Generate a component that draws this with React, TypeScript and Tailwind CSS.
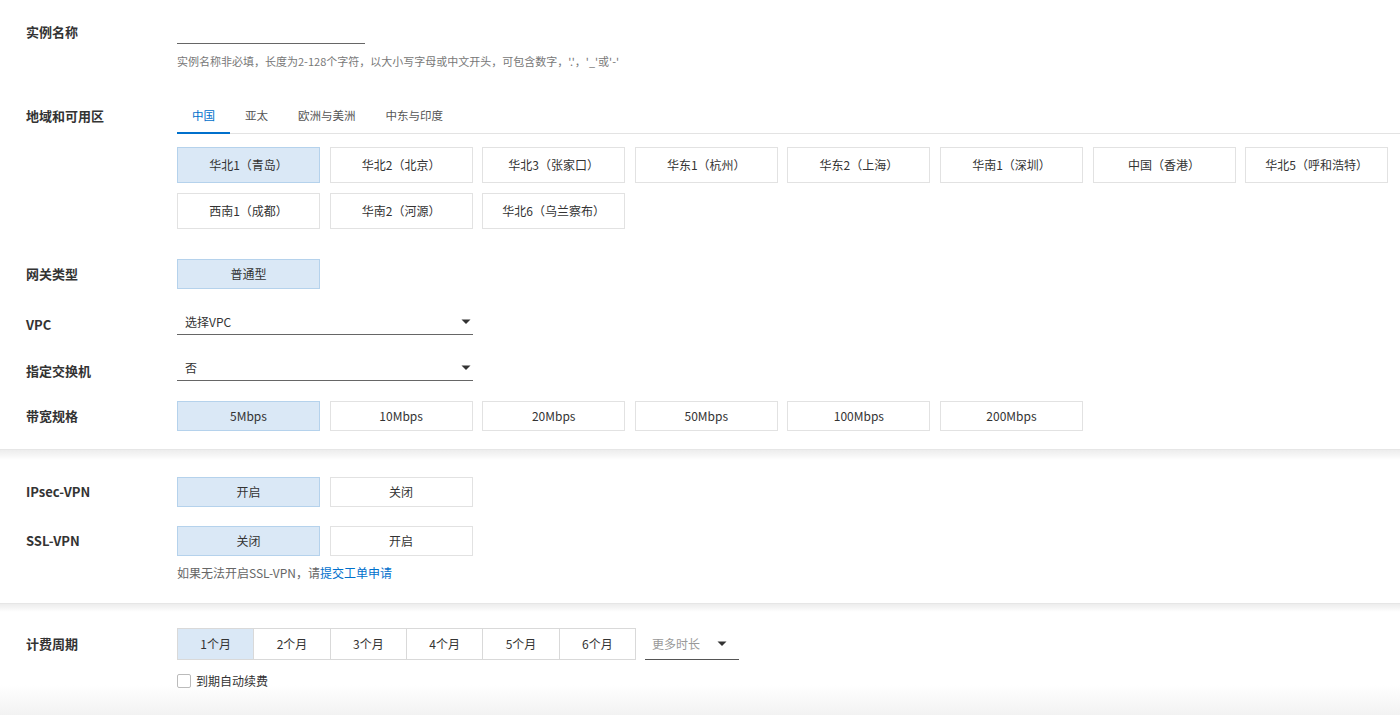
import React from "react";

function Label({ children }: { children: React.ReactNode }) {
  return (
    <div className="w-[177px] shrink-0 pl-[26px] text-[13px] font-bold text-[#333] leading-[20px]">
      {children}
    </div>
  );
}

function Opt({ label, active = false }: { label: string; active?: boolean }) {
  return (
    <div
      className={
        active
          ? "h-full flex items-center justify-center border border-[#b5d2ec] bg-[#dae8f6] text-[12px] text-[#333]"
          : "h-full flex items-center justify-center border border-[#e2e2e2] bg-white text-[12px] text-[#333]"
      }
    >
      {label}
    </div>
  );
}

function Arrow() {
  return (
    <svg width="10" height="6" viewBox="0 0 10 6">
      <polygon points="0.5,0.5 9.5,0.5 5,5" fill="#333" />
    </svg>
  );
}

function Select({ text }: { text: string }) {
  return (
    <div className="w-[296px] h-[26px] border-b border-[#666] flex items-center justify-between pl-[8px] pr-[2px] text-[12px] text-[#333]">
      <span>{text}</span>
      <Arrow />
    </div>
  );
}

function Sep({ h }: { h: string }) {
  return (
    <div
      className={
        h === "a"
          ? "h-[11px] border-t border-[#e6e6e6] bg-[linear-gradient(to_bottom,#ededed,#f5f5f5_50%,#ffffff)]"
          : "h-[9px] border-t border-[#e6e6e6] bg-[linear-gradient(to_bottom,#ededed,#f5f5f5_50%,#ffffff)]"
      }
    />
  );
}

export default function App() {
  const regions = [
    "华北1（青岛）",
    "华北2（北京）",
    "华北3（张家口）",
    "华东1（杭州）",
    "华东2（上海）",
    "华南1（深圳）",
    "中国（香港）",
    "华北5（呼和浩特）",
    "西南1（成都）",
    "华南2（河源）",
    "华北6（乌兰察布）",
  ];
  const bw = ["5Mbps", "10Mbps", "20Mbps", "50Mbps", "100Mbps", "200Mbps"];
  const months = ["1个月", "2个月", "3个月", "4个月", "5个月", "6个月"];
  const tabs = ["中国", "亚太", "欧洲与美洲", "中东与印度"];

  return (
    <div className="w-[1400px] h-[715px] overflow-hidden bg-white font-['Noto_Sans_CJK_SC','Helvetica_Neue',sans-serif] text-[#333]">
      {/* Section 1 */}
      <div className="pt-[20px] pb-[18px]">
        <div className="flex items-center h-[24px]">
          <Label>实例名称</Label>
          <div className="w-[188px] h-[24px] border-b border-[#666]" />
        </div>
        <div className="ml-[177px] mt-[10px] text-[11px] leading-[14px] text-[#777]">
          实例名称非必填，长度为2-128个字符，以大小写字母或中文开头，可包含数字，'.'，'_'或'-'
        </div>

        <div className="flex mt-[30px]">
          <div className="h-[35px] flex items-center">
            <Label>地域和可用区</Label>
          </div>
          <div className="flex-1">
            <div className="flex h-[36px] border-b border-[#e3e3e3]">
              {tabs.map((t, i) => (
                <div
                  key={t}
                  className={
                    i === 0
                      ? "relative px-[15px] flex items-center text-[11.5px] text-[#0070cc]"
                      : "relative px-[15px] flex items-center text-[11.5px] text-[#555]"
                  }
                >
                  {t}
                  {i === 0 && (
                    <div className="absolute left-0 right-0 bottom-[-1px] h-[2px] bg-[#0070cc]" />
                  )}
                </div>
              ))}
            </div>
            <div className="mt-[13px] grid grid-cols-[repeat(8,143px)] auto-rows-[36px] gap-x-[9.6px] gap-y-[10px]">
              {regions.map((r, i) => (
                <Opt key={r} label={r} active={i === 0} />
              ))}
            </div>
          </div>
        </div>

        <div className="flex items-center h-[30px] mt-[30px]">
          <Label>网关类型</Label>
          <div className="w-[143px] h-full">
            <Opt label="普通型" active />
          </div>
        </div>

        <div className="flex items-center h-[26px] mt-[20px]">
          <div className="pt-[5px]">
            <Label>VPC</Label>
          </div>
          <Select text="选择VPC" />
        </div>

        <div className="flex items-center h-[26px] mt-[20px]">
          <div className="pt-[5px]">
            <Label>指定交换机</Label>
          </div>
          <Select text="否" />
        </div>

        <div className="flex items-center h-[30px] mt-[20px]">
          <Label>带宽规格</Label>
          <div className="h-full grid grid-cols-[repeat(6,143px)] gap-x-[9.6px]">
            {bw.map((b, i) => (
              <Opt key={b} label={b} active={i === 0} />
            ))}
          </div>
        </div>
      </div>

      <Sep h="a" />

      {/* Section 2 */}
      <div className="pt-[17px] pb-[23px]">
        <div className="flex items-center h-[30px]">
          <Label>IPsec-VPN</Label>
          <div className="h-full grid grid-cols-[repeat(2,143px)] gap-x-[9.6px]">
            <Opt label="开启" active />
            <Opt label="关闭" />
          </div>
        </div>
        <div className="flex items-center h-[30px] mt-[19px]">
          <Label>SSL-VPN</Label>
          <div className="h-full grid grid-cols-[repeat(2,143px)] gap-x-[9.6px]">
            <Opt label="关闭" active />
            <Opt label="开启" />
          </div>
        </div>
        <div className="ml-[177px] mt-[10px] text-[12px] leading-[14px] text-[#666]">
          如果无法开启SSL-VPN，请<span className="text-[#0070cc]">提交工单申请</span>
        </div>
      </div>

      <Sep h="b" />

      {/* Section 3 */}
      <div className="h-[104px] pt-[16px] bg-[linear-gradient(to_bottom,#ffffff_70%,#f2f2f2)]">
        <div className="flex items-center h-[32px]">
          <Label>计费周期</Label>
          <div className="flex h-full border-l border-[#d9d9d9]">
            {months.map((m, i) => (
              <div
                key={m}
                className={
                  i === 0
                    ? "w-[76.33px] h-full flex items-center justify-center border-y border-r border-[#d9d9d9] bg-[#dae8f6] text-[12px] text-[#333]"
                    : "w-[76.33px] h-full flex items-center justify-center border-y border-r border-[#d9d9d9] bg-white text-[12px] text-[#333]"
                }
              >
                {m}
              </div>
            ))}
          </div>
          <div className="ml-[9px] w-[94px] h-full border-b border-[#555] flex items-center justify-between pl-[7px] pr-[12px] text-[12px] text-[#999]">
            <span>更多时长</span>
            <Arrow />
          </div>
        </div>
        <div className="ml-[177px] mt-[13px] flex items-center gap-[5px] h-[16px]">
          <div className="w-[14px] h-[14px] border border-[#bbb] rounded-[2px] bg-white" />
          <span className="text-[12px] text-[#333]">到期自动续费</span>
        </div>
      </div>
    </div>
  );
}
